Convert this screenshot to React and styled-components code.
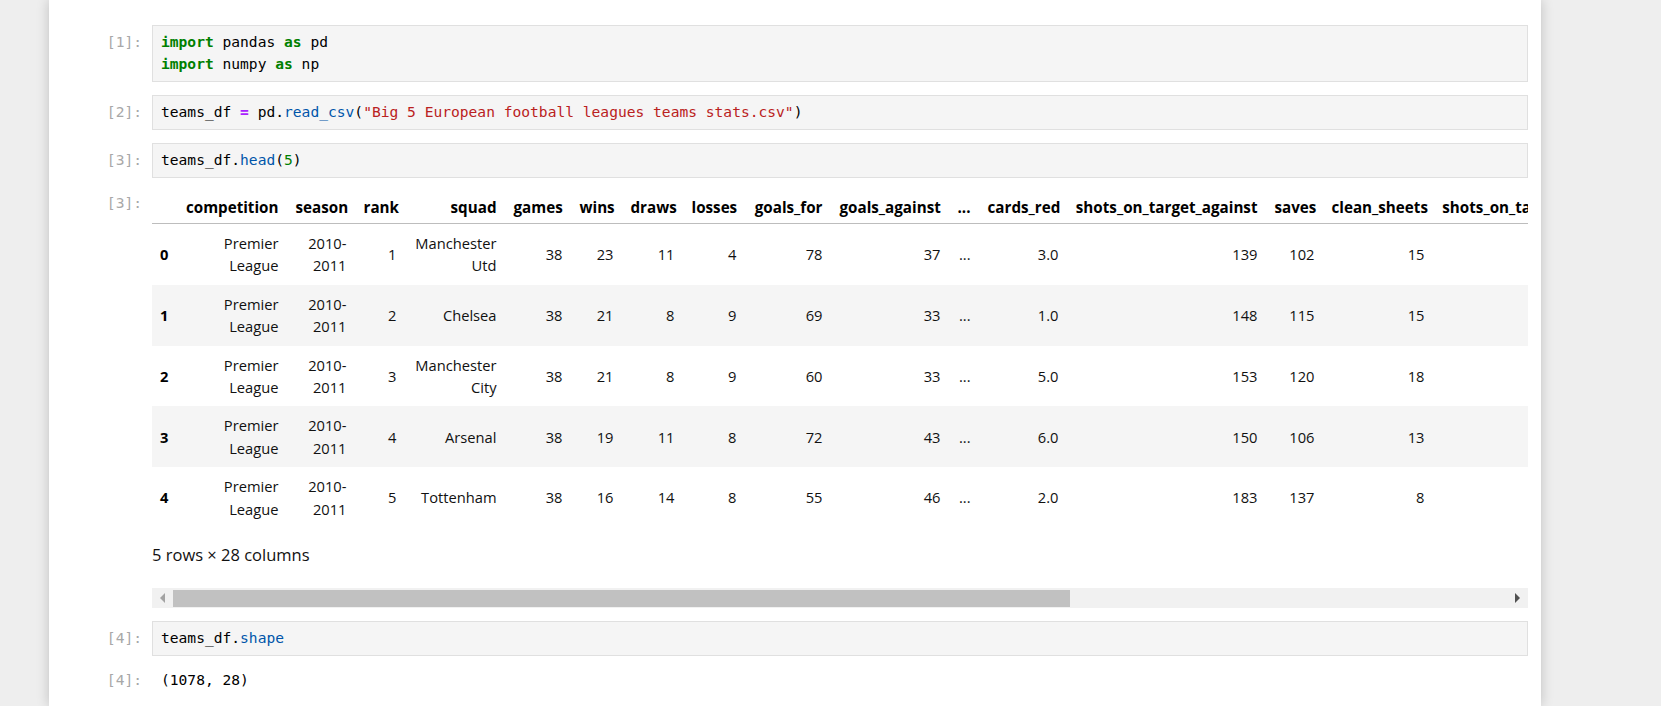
import React from 'react'
import styled, { createGlobalStyle } from 'styled-components'

const GlobalStyle = createGlobalStyle`
  html, body {
    margin: 0;
    padding: 0;
    background: #eeeeee;
  }
  body {
    font-family: "Open Sans", "Noto Sans", sans-serif;
    color: #000;
  }
`

const Page = styled.div`
  display: flex;
  min-height: 706px;
  padding-left: 49px;
`

const Notebook = styled.main`
  width: 1492px;
  min-height: 706px;
  box-sizing: border-box;
  padding: 25px 13px 0 0;
  background: #fff;
  box-shadow: 0 0 12px rgba(0, 0, 0, 0.2);
  overflow: hidden;
`

const Cell = styled.section`
  display: grid;
  grid-template-columns: 103px minmax(0, 1fr);
  margin-top: ${props => props.$gap || 0}px;
`

const Prompt = styled.div`
  padding: ${props => props.$top || 0}px 10px 0 0;
  font-family: "DejaVu Sans Mono", monospace;
  font-size: 14.6px;
  line-height: 22px;
  color: #a8a8a8;
  text-align: right;
`

const Editor = styled.pre`
  margin: 0;
  padding: 5px 8px 6px;
  border: 1px solid #e0e0e0;
  background: #f5f5f5;
  font-family: "DejaVu Sans Mono", monospace;
  font-size: 14.6px;
  line-height: 22px;
  color: #000;
`

const tokenColors = {
  kw: '#008000',
  op: '#aa22ff',
  prop: '#0055aa',
  str: '#ba2121',
  num: '#008000',
}

const Tok = styled.span`
  color: ${props => tokenColors[props.$k]};
  font-weight: ${props => (props.$k === 'kw' || props.$k === 'op' ? 700 : 400)};
`

const Stream = styled.pre`
  margin: 0;
  padding: 0 0 0 9px;
  font-family: "DejaVu Sans Mono", monospace;
  font-size: 14.6px;
  line-height: 22px;
  color: #000;
`

const Output = styled.div`
  min-width: 0;
`

const Scroller = styled.div`
  width: 100%;
  overflow: hidden;
`

const Table = styled.table`
  table-layout: fixed;
  border-collapse: collapse;
  border-spacing: 0;
  font-size: 14.7px;
`

const Col = styled.col`
  width: ${props => props.$w}px;
`

const HeadCell = styled.th`
  padding: 5px 8.5px;
  font-size: 15.2px;
  line-height: 22px;
  font-weight: 700;
  text-align: right;
  white-space: nowrap;
  border-bottom: 1px solid #bdbdbd;
`

const Row = styled.tr`
  &:nth-child(even) {
    background: #f5f5f5;
  }
`

const IndexCell = styled.th`
  padding: 8px 8px;
  line-height: 22.4px;
  font-weight: 700;
  text-align: left;
`

const DataCell = styled.td`
  padding: 8px 8.5px;
  line-height: 22.4px;
  text-align: right;
  vertical-align: middle;
  color: #111;
`

const Summary = styled.p`
  margin: 16px 0 22px;
  font-size: 16.5px;
  line-height: 22px;
  color: #111;
`

const ScrollTrack = styled.div`
  display: flex;
  align-items: center;
  height: 20px;
  background: #f1f1f1;
`

const ScrollButton = styled.div`
  display: flex;
  align-items: center;
  justify-content: center;
  flex: 0 0 21px;
  height: 100%;
`

const Arrow = styled.span`
  width: 0;
  height: 0;
  border-top: 5px solid transparent;
  border-bottom: 5px solid transparent;
  ${props => props.$dir === 'left'
    ? `border-right: 5px solid ${props.$dim ? '#a3a3a3' : '#505050'};`
    : `border-left: 5px solid ${props.$dim ? '#a3a3a3' : '#505050'};`}
`

const ThumbLane = styled.div`
  flex: 1;
  height: 100%;
  display: flex;
  align-items: center;
`

const Thumb = styled.div`
  height: 17px;
  background: #c1c1c1;
`

// the frame is wider than the cell; only the first columns fit in view
const columns = [
  { key: 'idx', label: '', w: 25 },
  { key: 'competition', label: 'competition', w: 110 },
  { key: 'season', label: 'season', w: 68 },
  { key: 'rank', label: 'rank', w: 50 },
  { key: 'squad', label: 'squad', w: 100 },
  { key: 'games', label: 'games', w: 66 },
  { key: 'wins', label: 'wins', w: 51 },
  { key: 'draws', label: 'draws', w: 61 },
  { key: 'losses', label: 'losses', w: 62 },
  { key: 'goals_for', label: 'goals_for', w: 86 },
  { key: 'goals_against', label: 'goals_against', w: 118 },
  { key: 'more', label: '...', w: 30 },
  { key: 'cards_red', label: 'cards_red', w: 88 },
  { key: 'sota', label: 'shots_on_target_against', w: 199 },
  { key: 'saves', label: 'saves', w: 57 },
  { key: 'clean_sheets', label: 'clean_sheets', w: 110 },
  { key: 'sotf', label: 'shots_on_target_for', w: 166 },
]

const FRAME_WIDTH = 2046
const VISIBLE_WIDTH = 1376

const teams = [
  ['Premier League', '2010-2011', 1, 'Manchester Utd', 38, 23, 11, 4, 78, 37, '...', '3.0', 139, 102, 15, 226],
  ['Premier League', '2010-2011', 2, 'Chelsea', 38, 21, 8, 9, 69, 33, '...', '1.0', 148, 115, 15, 247],
  ['Premier League', '2010-2011', 3, 'Manchester City', 38, 21, 8, 9, 60, 33, '...', '5.0', 153, 120, 18, 204],
  ['Premier League', '2010-2011', 4, 'Arsenal', 38, 19, 11, 8, 72, 43, '...', '6.0', 150, 106, 13, 242],
  ['Premier League', '2010-2011', 5, 'Tottenham', 38, 16, 14, 8, 55, 46, '...', '2.0', 183, 137, 8, 219],
]

const tableWidth = columns.reduce((sum, c) => sum + c.w, 0)

const Code = ({ lines }) => (
  <Editor>
    {lines.map((line, i) => (
      <div key={i}>
        {line.map(([k, text], j) => (k ? <Tok key={j} $k={k}>{text}</Tok> : <span key={j}>{text}</span>))}
      </div>
    ))}
  </Editor>
)

const DataFrame = () => (
  <Output>
    <Scroller>
      <Table style={{ width: tableWidth }}>
        <colgroup>
          {columns.map(c => <Col key={c.key} $w={c.w} />)}
        </colgroup>
        <thead>
          <tr>
            {columns.map(c => <HeadCell key={c.key}>{c.label}</HeadCell>)}
          </tr>
        </thead>
        <tbody>
          {teams.map((row, i) => (
            <Row key={i}>
              <IndexCell>{i}</IndexCell>
              {row.map((value, j) => <DataCell key={j}>{value}</DataCell>)}
            </Row>
          ))}
        </tbody>
      </Table>
      <Summary>5 rows × 28 columns</Summary>
    </Scroller>
    <ScrollTrack>
      <ScrollButton><Arrow $dir="left" $dim /></ScrollButton>
      <ThumbLane>
        <Thumb style={{ width: `${(VISIBLE_WIDTH / FRAME_WIDTH) * 100}%` }} />
      </ThumbLane>
      <ScrollButton><Arrow $dir="right" /></ScrollButton>
    </ScrollTrack>
  </Output>
)

export default function App() {
  return (
    <>
      <GlobalStyle />
      <Page>
        <Notebook>
          <Cell>
            <Prompt $top={6}>[1]:</Prompt>
            <Code
              lines={[
                [['kw', 'import'], [null, ' pandas '], ['kw', 'as'], [null, ' pd']],
                [['kw', 'import'], [null, ' numpy '], ['kw', 'as'], [null, ' np']],
              ]}
            />
          </Cell>
          <Cell $gap={13}>
            <Prompt $top={6}>[2]:</Prompt>
            <Code
              lines={[
                [
                  [null, 'teams_df '],
                  ['op', '='],
                  [null, ' pd.'],
                  ['prop', 'read_csv'],
                  [null, '('],
                  ['str', '"Big 5 European football leagues teams stats.csv"'],
                  [null, ')'],
                ],
              ]}
            />
          </Cell>
          <Cell $gap={13}>
            <Prompt $top={6}>[3]:</Prompt>
            <Code lines={[[[null, 'teams_df.'], ['prop', 'head'], [null, '('], ['num', '5'], [null, ')']]]} />
          </Cell>
          <Cell $gap={13}>
            <Prompt $top={1}>[3]:</Prompt>
            <DataFrame />
          </Cell>
          <Cell $gap={13}>
            <Prompt $top={6}>[4]:</Prompt>
            <Code lines={[[[null, 'teams_df.'], ['prop', 'shape']]]} />
          </Cell>
          <Cell $gap={13}>
            <Prompt>[4]:</Prompt>
            <Stream>(1078, 28)</Stream>
          </Cell>
        </Notebook>
      </Page>
    </>
  )
}
